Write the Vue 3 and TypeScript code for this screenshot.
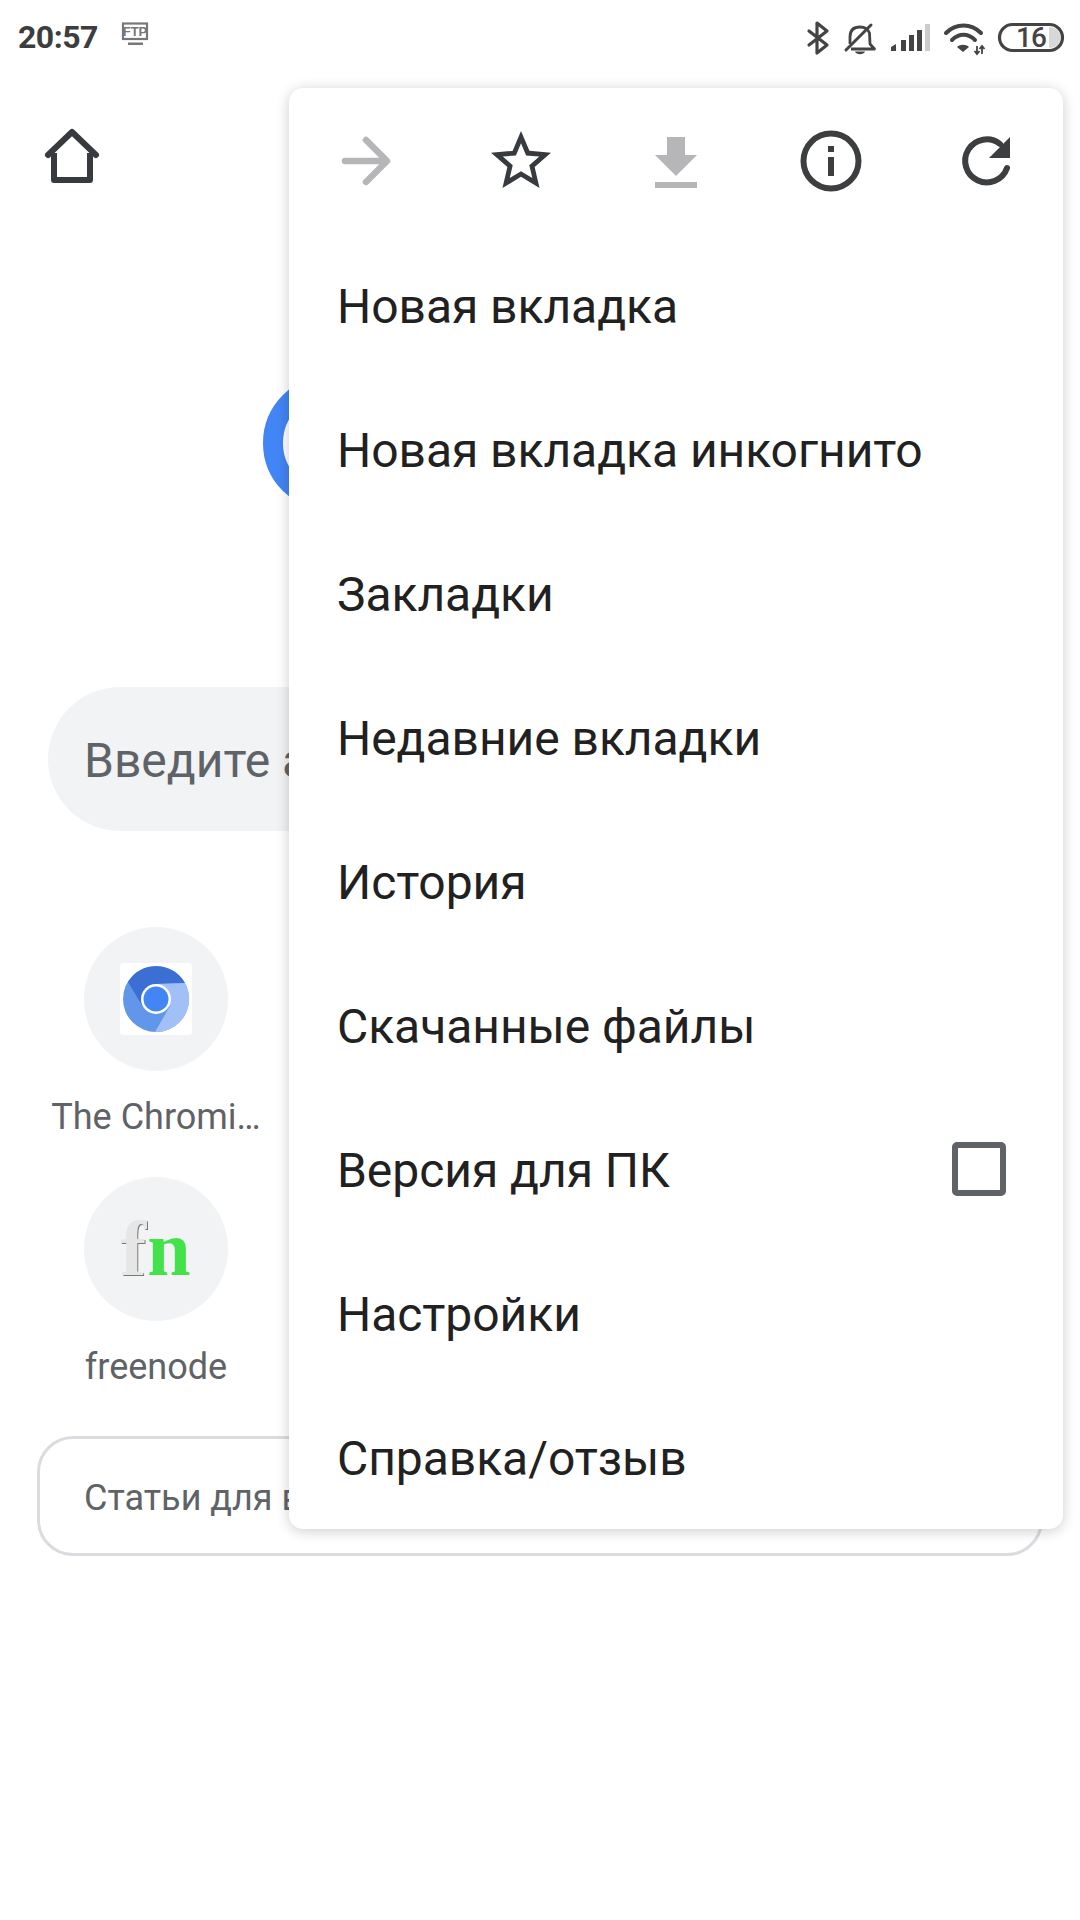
<script setup lang="ts">
interface MenuItem {
  label: string
  checkbox?: boolean
}

const items: MenuItem[] = [
  { label: 'Новая вкладка' },
  { label: 'Новая вкладка инкогнито' },
  { label: 'Закладки' },
  { label: 'Недавние вкладки' },
  { label: 'История' },
  { label: 'Скачанные файлы' },
  { label: 'Версия для ПК', checkbox: true },
  { label: 'Настройки' },
  { label: 'Справка/отзыв' },
]
</script>

<template>
  <div class="page">
    <header class="status">
      <span class="time">20:57</span>
      <svg class="ftp" width="30" height="26" viewBox="0 0 30 26" aria-hidden="true">
        <rect x="2" y="1.500" width="24" height="15.500" fill="none" stroke="#777" stroke-width="2.200" />
        <text x="14" y="14" text-anchor="middle" class="ftp-text">FTP</text>
        <rect x="7" y="20.500" width="15" height="2.500" fill="#777" />
      </svg>
      <div class="status-right">
        <svg width="30" height="70" viewBox="804 0 30 70" aria-hidden="true">
          <path d="M811 29 L829 43 L819 51 V21 L829 29 L811 43" fill="none" stroke="#444" stroke-width="3.200" stroke-linecap="round" stroke-linejoin="round" />
        </svg>
        <svg width="36" height="70" viewBox="842 0 36 70" aria-hidden="true">
          <path d="M850 42 V35 C850 28 854 25 860 25 C865 25 868 27 869.500 31 L870 42 L874.500 47 H851" fill="none" stroke="#444" stroke-width="2.800" stroke-linejoin="round" />
          <path d="M846 48 L871 23" stroke="#444" stroke-width="3" stroke-linecap="round" />
          <path d="M855 49.500 H865 C864 53 856 53 855 49.500 Z" fill="#444" />
        </svg>
        <svg width="44" height="70" viewBox="888 0 44 70" aria-hidden="true">
          <path d="M891 49 V45 L896 42 V49 Z" fill="#444" />
          <rect x="901" y="38" width="5" height="11" fill="#444" />
          <rect x="909" y="33" width="5" height="16" fill="#444" />
          <rect x="917" y="28" width="5" height="21" fill="#444" />
          <rect x="925" y="22" width="5" height="27" fill="#ccc" />
        </svg>
        <svg width="44" height="70" viewBox="942 0 44 70" aria-hidden="true">
          <path d="M946 31 C956 21 971 21 981 31" fill="none" stroke="#444" stroke-width="4" stroke-linecap="round" />
          <path d="M952 38 C959 31 968 31 975 38" fill="none" stroke="#444" stroke-width="4" stroke-linecap="round" />
          <path d="M957 45 C960 42 966 42 969 45 L963 50 Z" fill="#444" />
          <path d="M977 44 V52 M974.500 49 L977 52 L979.500 49 M982 52 V44 M979.500 47 L982 44 L984.500 47" fill="none" stroke="#444" stroke-width="1.800" />
        </svg>
        <svg width="70" height="70" viewBox="996 0 70 70" aria-hidden="true">
          <path d="M1049 25 H1050 A10.500 10.500 0 0 1 1050 46 H1049 Z" fill="#d8d8d8" />
          <rect x="999.500" y="22.500" width="63" height="26" rx="13" fill="none" stroke="#444" stroke-width="3.200" />
          <text x="1031" y="45" text-anchor="middle" class="batt-text">16</text>
        </svg>
      </div>
    </header>

    <nav class="nav">
      <svg width="60" height="64" viewBox="42 125 60 64" aria-hidden="true">
        <path d="M54 153 V180 H90 V153" fill="none" stroke="#373a3e" stroke-width="6" stroke-linejoin="round" />
        <path d="M48 155 L72 132 L96 155" fill="none" stroke="#373a3e" stroke-width="6" stroke-linecap="round" stroke-linejoin="round" />
      </svg>
    </nav>

    <div class="logo"></div>

    <div class="search"><span class="clipped">Введите адрес</span></div>

    <section class="tiles">
      <div class="tile">
        <div class="tile-icon">
          <svg width="72" height="72" viewBox="120 963 72 72" aria-hidden="true">
            <rect x="120" y="963" width="72" height="72" rx="3" fill="#fff" />
            <circle cx="156" cy="999" r="33" fill="#6296ea" />
            <path d="M128 982 A33 33 0 0 1 185 983 L156 984 L143 1007 Z" fill="#3b6fd4" />
            <path d="M185 983 A33 33 0 0 1 155 1032 L170 1006 L156 984 Z" fill="#a0c0f7" />
            <circle cx="156" cy="999" r="15" fill="#fff" />
            <circle cx="156" cy="999" r="12.500" fill="#4285f4" />
          </svg>
        </div>
        <span class="tile-label">The Chromi…</span>
      </div>
      <div class="tile">
        <div class="tile-icon">
          <span class="fn"><span class="fn-f">f</span><span class="fn-n">n</span></span>
        </div>
        <span class="tile-label">freenode</span>
      </div>
    </section>

    <div class="articles"><span class="clipped">Статьи для вас</span></div>

    <aside class="menu">
      <div class="menu-toolbar">
        <div class="tool">
          <svg width="72" height="72" viewBox="330 125 72 72" aria-hidden="true">
            <path d="M345 161 H385 M366 140 L387 161 L366 182" fill="none" stroke="#b6b6b8" stroke-width="6.500" stroke-linecap="round" stroke-linejoin="round" />
          </svg>
        </div>
        <div class="tool">
          <svg width="72" height="72" viewBox="0 0 24 24" aria-hidden="true">
            <path fill="#373a3e" d="M22 9.24l-7.19-.62L12 2 9.19 8.63 2 9.24l5.46 4.730L5.820 21 12 17.270 18.180 21l-1.630-7.030L22 9.240zM12 15.400l-3.760 2.270 1-4.280-3.320-2.880 4.380-.38L12 6.100l1.710 4.040 4.380.38-3.320 2.880 1 4.280L12 15.400z" />
          </svg>
        </div>
        <div class="tool">
          <svg width="72" height="72" viewBox="0 -1 24 24" aria-hidden="true">
            <path fill="#b6b6b8" d="M19 9h-4V3H9v6H5l7 7 7-7zM5 18v2h14v-2H5z" />
          </svg>
        </div>
        <div class="tool">
          <svg width="72" height="72" viewBox="795 125 72 72" aria-hidden="true">
            <circle cx="831" cy="161" r="27.500" fill="none" stroke="#3c3e40" stroke-width="6" />
            <rect x="828" y="146" width="6" height="6" fill="#3c3e40" />
            <rect x="828" y="157" width="6" height="19" fill="#3c3e40" />
          </svg>
        </div>
        <div class="tool">
          <svg width="72" height="72" viewBox="950 125 72 72" aria-hidden="true">
            <path d="M1007 168 A21.500 21.500 0 1 1 1000 144" fill="none" stroke="#3c3e40" stroke-width="6" stroke-linecap="round" />
            <path d="M1010 137 V158 H989 Z" fill="#3c3e40" />
          </svg>
        </div>
      </div>
      <ul class="menu-list">
        <li v-for="item in items" :key="item.label" class="menu-item">
          <span>{{ item.label }}</span>
          <span v-if="item.checkbox" class="checkbox"></span>
        </li>
      </ul>
    </aside>
  </div>
</template>

<style scoped>
.page {
  position: relative;
  width: 1080px;
  height: 1920px;
  overflow: hidden;
  background: #fff;
  font-family: Roboto, "Liberation Sans", sans-serif;
}

.status {
  display: flex;
  align-items: center;
  height: 73px;
  padding: 0 14px 0 18px;
  box-sizing: border-box;
}
.time {
  font-size: 32px;
  font-weight: 700;
  letter-spacing: -0.5px;
  color: #3c3d3f;
}
.ftp {
  margin-left: 23px;
  margin-bottom: 4px;
}
.ftp-text {
  font-family: "Liberation Sans", sans-serif;
  font-size: 13px;
  font-weight: 700;
  fill: #777;
}
.status-right {
  display: flex;
  align-items: center;
  gap: 10px;
  margin-left: auto;
}
.batt-text {
  font-size: 28px;
  font-weight: 500;
  letter-spacing: -1px;
  fill: #444;
}

.nav {
  display: flex;
  align-items: center;
  height: 168px;
  padding-left: 42px;
}

.logo {
  width: 136px;
  height: 136px;
  margin: 134px 0 0 263px;
  border: 20px solid #4285f4;
  border-radius: 50%;
  box-sizing: border-box;
}

.search {
  display: flex;
  align-items: center;
  height: 144px;
  margin: 176px 48px 0;
  padding: 2px 0 0 36px;
  box-sizing: border-box;
  border-radius: 72px;
  background: #f1f3f4;
  color: #5f6368;
  font-size: 48px;
}
.clipped {
  width: 205px;
  overflow: hidden;
  white-space: nowrap;
}

.tiles {
  display: flex;
  flex-direction: column;
  margin: 96px 0 0 48px;
  width: 216px;
}
.tile {
  display: flex;
  flex-direction: column;
  align-items: center;
  height: 250px;
}
.tile-icon {
  display: flex;
  align-items: center;
  justify-content: center;
  width: 144px;
  height: 144px;
  border-radius: 50%;
  background: #f1f3f4;
}
.tile-label {
  margin-top: 25px;
  font-size: 36px;
  line-height: 42px;
  color: #5f6368;
  white-space: nowrap;
}
.fn {
  font-family: "Liberation Serif", serif;
  font-size: 78px;
  font-weight: 700;
  line-height: 1;
  letter-spacing: 1px;
}
.fn-f {
  color: #e6e6e6;
  text-shadow: 1px 1px 0 #777;
}
.fn-n {
  color: #44e24a;
}

.articles {
  display: flex;
  align-items: center;
  height: 120px;
  margin: 9px 37px 0;
  padding: 4px 0 0 44px;
  border: 3px solid #dadce0;
  border-radius: 36px;
  box-sizing: border-box;
  color: #5f6368;
  font-size: 36px;
}

.menu {
  position: absolute;
  left: 289px;
  top: 88px;
  width: 774px;
  height: 1441px;
  overflow: hidden;
  border-radius: 14px;
  background: #fff;
  box-shadow: 0 2px 14px rgba(0, 0, 0, 0.2);
}
.menu-toolbar {
  display: flex;
  height: 146px;
  padding-top: 37px;
  box-sizing: border-box;
}
.tool {
  flex: 1;
  display: flex;
  justify-content: center;
  align-items: flex-start;
}
.menu-list {
  margin: 0;
  padding: 0;
  list-style: none;
}
.menu-item {
  display: flex;
  align-items: center;
  justify-content: space-between;
  height: 144px;
  padding: 0 57px 0 48px;
  color: #212121;
  font-size: 48px;
  letter-spacing: -0.05px;
}
.checkbox {
  width: 54px;
  height: 54px;
  margin-bottom: 2px;
  border: 6px solid #5f6368;
  border-radius: 5px;
  box-sizing: border-box;
}
</style>
